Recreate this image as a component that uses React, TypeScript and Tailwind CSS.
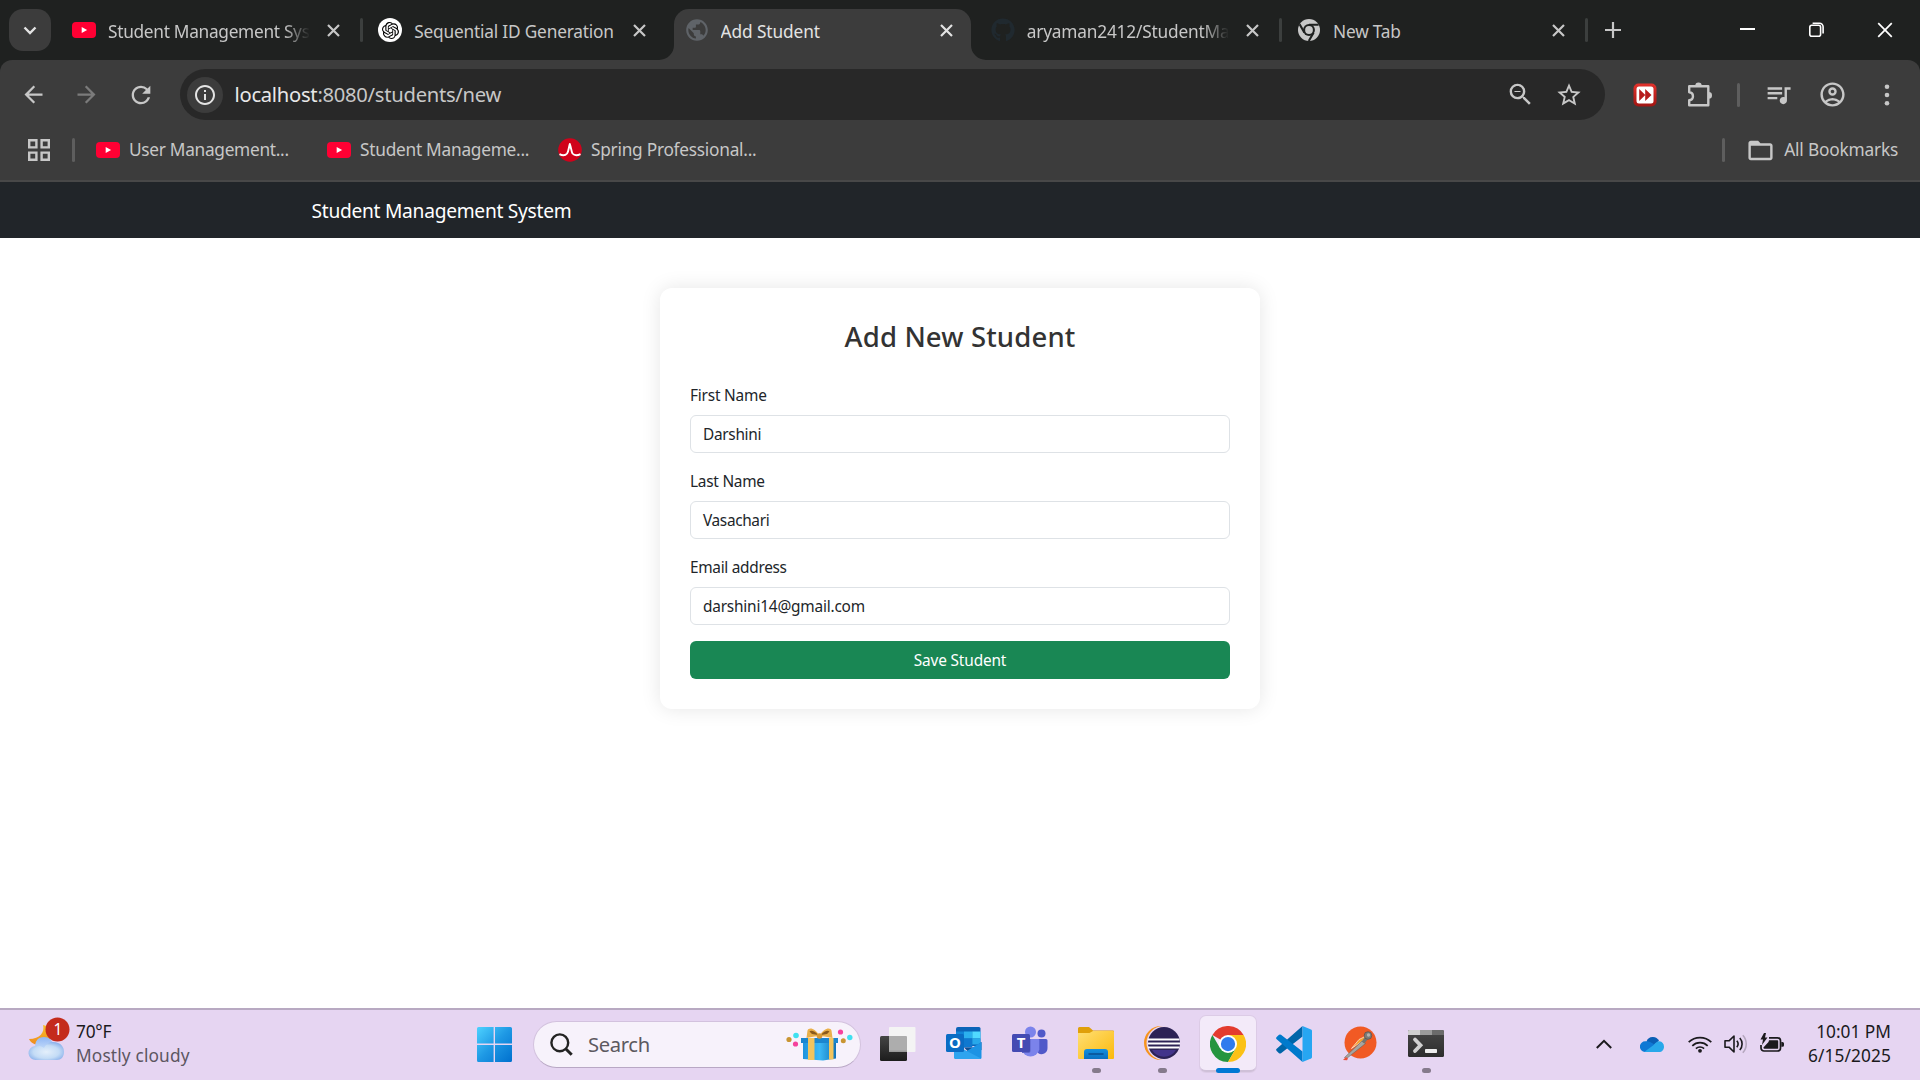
import React from "react";
import {
  MdArrowBack,
  MdArrowForward,
  MdRefresh,
  MdInfoOutline,
  MdZoomOut,
  MdStarBorder,
  MdQueueMusic,
  MdOutlineAccountCircle,
  MdFolderOpen,
  MdPublic,
} from "react-icons/md";
import { FaGithub } from "react-icons/fa";
import { SiOpenai } from "react-icons/si";

/* ---------- small browser icons ---------- */

const YouTube = () => (
  <svg width="24" height="24" viewBox="0 0 24 24" className="shrink-0">
    <rect x="0" y="4" width="24" height="16" rx="4" fill="#ff0033" />
    <path d="M9.7 8.9v6.2l5.4-3.1z" fill="#fff" />
  </svg>
);

const Pulse = () => (
  <svg width="24" height="24" viewBox="0 0 24 24" className="shrink-0">
    <circle cx="12" cy="12" r="11.8" fill="#d0021b" />
    <path d="M1.5 16.2c3 1.6 6 1.2 7.6-.7 1.5-2 1.7-6.2 2.7-9.5 1.3 3.3 1.5 7.5 2.7 9.5 1.7 2 5 2.1 8 .6" fill="none" stroke="#fff" strokeWidth="1.9" strokeLinejoin="round" />
  </svg>
);

const OpenAIBadge = () => (
  <span className="flex size-6 shrink-0 items-center justify-center rounded-full bg-white text-black">
    <SiOpenai size={17} />
  </span>
);

const GrayChrome = () => (
  <svg width="22" height="22" viewBox="0 0 48 48">
    <circle cx="24" cy="24" r="24" fill="#c7c7c7" />
    <path d="M24 12.500H45M14 29.700L3.500 11.600M34 29.700L23.500 47.900" stroke="#1f2120" strokeWidth="4.500" fill="none" />
    <circle cx="24" cy="24" r="13" fill="#1f2120" />
    <circle cx="24" cy="24" r="8.500" fill="#c7c7c7" />
  </svg>
);

const Cross = ({ color, size = 13, w = 2.2 }: { color: string; size?: number; w?: number }) => (
  <svg width={size} height={size} viewBox="0 0 13 13">
    <path d="M1 1l11 11M12 1L1 12" stroke={color} strokeWidth={w} fill="none" />
  </svg>
);

const Puzzle = () => (
  <svg width="27" height="27" viewBox="0 0 27 27">
    <path d="M3.2 5.2H22.3V24.2H3.2V19.3C8.2 19 8.2 11.6 3.2 11.2Z" fill="none" stroke="#c7c7c7" strokeWidth="2.4" strokeLinejoin="round" />
    <path d="M9.3 4.600a3.200 3.200 0 0 1 6.400 0zM22.700 11.100a3.300 3.300 0 0 1 0 6.600z" fill="#c7c7c7" />
  </svg>
);

const FastForward = () => (
  <svg width="24" height="24" viewBox="0 0 24 24">
    <defs>
      <linearGradient id="ff" x1="0" y1="0" x2="0" y2="1">
        <stop offset="0" stopColor="#e2322c" />
        <stop offset="1" stopColor="#a01512" />
      </linearGradient>
    </defs>
    <rect x=".5" y=".5" width="23" height="23" rx="5" fill="url(#ff)" />
    <rect x="3.500" y="3.500" width="17" height="17" rx="2.500" fill="#fff" />
    <path d="M6.200 6l6.100 6-6.100 6zM12.200 6l6.300 6-6.300 6z" fill="#b71c1c" />
  </svg>
);

/* ---------- tab strip ---------- */

type TabProps = {
  icon: React.ReactNode;
  title: string;
  spacing: string;
  active?: boolean;
  fade?: boolean;
  divider?: boolean;
};

function Tab({ icon, title, spacing, active, fade, divider }: TabProps) {
  return (
    <div className="relative flex h-full w-[306.25px] shrink-0 items-center pl-[12px]">
      {active && (
        <div className="absolute top-[9px] bottom-0 left-[1px] w-[297px] rounded-t-[15px] bg-[#3c3c3c]">
          <svg className="absolute bottom-0 -left-[15px]" width="15" height="15" viewBox="0 0 15 15">
            <path d="M15 0V15H0A15 15 0 0 0 15 0Z" fill="#3c3c3c" />
          </svg>
          <svg className="absolute -right-[15px] bottom-0" width="15" height="15" viewBox="0 0 15 15">
            <path d="M0 0V15H15A15 15 0 0 1 0 0Z" fill="#3c3c3c" />
          </svg>
        </div>
      )}
      <span className="relative flex w-6 justify-center">{icon}</span>
      <span
        className={`relative mt-[4px] ml-[12px] w-[202px] overflow-hidden text-[17.3px] whitespace-nowrap ${spacing} ${
          active ? "text-[#e3e3e3]" : "text-[#c7c7c7]"
        } ${fade ? "[mask-image:linear-gradient(to_right,black_87%,transparent_100%)]" : ""}`}
      >
        {title}
      </span>
      <span className="relative ml-[17px]">
        <Cross color={active ? "#e3e3e3" : "#c7c7c7"} />
      </span>
      {divider && <span className="ml-[20px] h-6 w-[3px] rounded-full bg-[#3c3f3e]" />}
    </div>
  );
}

function TabStrip() {
  return (
    <div className="flex h-[60px] items-center bg-[#1f2120]">
      <div className="ml-[9px] flex size-[42px] items-center justify-center rounded-[14px] bg-[#3c3c3c]">
        <svg width="14" height="9" viewBox="0 0 14 9">
          <path d="M1.500 1.500L7 7l5.500-5.500" fill="none" stroke="#e3e3e3" strokeWidth="2.400" />
        </svg>
      </div>
      <div className="ml-[9px] flex h-full">
        <Tab icon={<YouTube />} title="Student Management System" spacing="tracking-[-0.3px]" fade divider />
        <Tab icon={<OpenAIBadge />} title="Sequential ID Generation" spacing="tracking-[-0.2px]" />
        <Tab icon={<MdPublic size={26} color="#5f6368" className="-m-px shrink-0" />} title="Add Student" spacing="tracking-[-0.1px]" active />
        <Tab icon={<FaGithub size={24} color="#20292f" />} title="aryaman2412/StudentManagement" spacing="tracking-[-0.2px]" fade divider />
        <Tab icon={<GrayChrome />} title="New Tab" spacing="tracking-[-0.2px]" divider />
      </div>
      <svg className="ml-[14px]" width="16" height="16" viewBox="0 0 16 16">
        <path d="M8 0v16M0 8h16" stroke="#c7c7c7" strokeWidth="2.200" />
      </svg>
      <div className="flex flex-1 items-center justify-end pr-[27px]">
        <svg width="15" height="16" viewBox="0 0 15 16">
          <path d="M0 7h15" stroke="#fff" strokeWidth="2" />
        </svg>
        <svg className="ml-[54px]" width="15" height="16" viewBox="0 0 15 16" fill="none" stroke="#fff" strokeWidth="1.600">
          <rect x=".8" y="3.300" width="10.800" height="11" rx="2" />
          <path d="M3.600 1.200h6.900a3.600 3.600 0 0 1 3.600 3.600v6.600" />
        </svg>
        <span className="ml-[53px]">
          <Cross color="#fff" size={16} w={1.4} />
        </span>
      </div>
    </div>
  );
}

/* ---------- toolbar + bookmarks ---------- */

function Toolbar() {
  return (
    <div className="flex h-[51px] items-center text-[#c7c7c7]">
      <MdArrowBack size={27} className="ml-[19.500px]" />
      <MdArrowForward size={27} className="ml-[26.500px] text-[#7b7b7b]" />
      <MdRefresh size={28} className="ml-[26.500px]" />
      <div className="ml-[25px] flex h-[51px] w-[1425px] items-center rounded-full bg-[#282828] pl-[7px]">
        <span className="flex size-9 items-center justify-center rounded-full bg-[#3c3c3c] text-[#e3e3e3]">
          <MdInfoOutline size={24} />
        </span>
        <span className="ml-[12px] text-[20.200px] tracking-[-0.270px] text-[#c7c7c7]">
          <span className="text-[#e8e8e8]">localhost</span>:8080/students/new
        </span>
        <MdZoomOut size={29} className="mr-[20px] ml-auto" />
        <MdStarBorder size={28} className="mr-[22px]" />
      </div>
      <span className="ml-[28px]">
        <FastForward />
      </span>
      <span className="ml-[29px]">
        <Puzzle />
      </span>
      <span className="ml-[24px] h-6 w-[3px] rounded-full bg-[#5e5e5e]" />
      <MdQueueMusic size={29} className="ml-[24px]" />
      <MdOutlineAccountCircle size={29} className="ml-[25px]" />
      <svg className="ml-[37px]" width="6" height="24" viewBox="0 0 6 24" fill="#c7c7c7">
        <circle cx="3" cy="3.800" r="2.300" />
        <circle cx="3" cy="12" r="2.300" />
        <circle cx="3" cy="20.200" r="2.300" />
      </svg>
    </div>
  );
}

function Bookmarks() {
  return (
    <div className="flex h-[60px] items-center text-[17.300px] whitespace-nowrap text-[#c7c7c7]">
      <svg className="ml-[28px]" width="22" height="22" viewBox="0 0 22 22" fill="none" stroke="#c7c7c7" strokeWidth="2.400">
        <path d="M1.200 1.200h7.200v7.200H1.200zM13.600 1.200h7.200v7.200h-7.200zM1.200 13.600h7.200v7.200H1.200zM13.600 13.600h7.200v7.200h-7.200z" />
      </svg>
      <span className="ml-[22px] h-6 w-[3px] rounded-full bg-[#5e5e5e]" />
      <div className="ml-[21px] flex w-[231px] items-center gap-[9px] tracking-[-0.300px]">
        <YouTube />
        User Management...
      </div>
      <div className="flex w-[231px] items-center gap-[9px] tracking-[-0.260px]">
        <YouTube />
        Student Manageme...
      </div>
      <div className="flex items-center gap-[9px] tracking-[-0.260px]">
        <Pulse />
        Spring Professional...
      </div>
      <span className="ml-auto h-6 w-[3px] rounded-full bg-[#5e5e5e]" />
      <MdFolderOpen size={29} className="ml-[21px]" />
      <span className="mr-[22px] ml-[9.500px] tracking-[-0.200px]">All Bookmarks</span>
    </div>
  );
}

/* ---------- page ---------- */

function Field({ label, value, labelSpacing, valueSpacing }: Record<"label" | "value" | "labelSpacing" | "valueSpacing", string>) {
  return (
    <div className="mb-4">
      <div className={`mb-2 h-6 pt-px leading-6 ${labelSpacing}`}>{label}</div>
      <div className={`flex h-[38px] items-center rounded-[6px] border border-[#dee2e6] px-3 pt-[2px] ${valueSpacing}`}>{value}</div>
    </div>
  );
}

function Page() {
  return (
    <div className="flex flex-1 flex-col bg-white">
      <div className="flex h-14 items-center bg-[#212529] pl-[311.500px] text-[19.200px] tracking-[-0.280px] text-white">
        <span className="mt-[2px]">Student Management System</span>
      </div>
      <div className="mx-auto mt-[50px] h-[421px] w-[600px] rounded-[12px] bg-white p-[30px] text-[15.400px] text-[#212529] shadow-[0_0_20px_rgba(0,0,0,0.1)]">
        <h2 className="h-[65px] pt-px text-center text-[27.500px] leading-[36px] font-medium tracking-[0.150px] text-[#333]">Add New Student</h2>
        <Field label="First Name" value="Darshini" labelSpacing="tracking-[-0.200px]" valueSpacing="tracking-[-0.300px]" />
        <Field label="Last Name" value="Vasachari" labelSpacing="tracking-[-0.250px]" valueSpacing="tracking-[-0.350px]" />
        <Field label="Email address" value="darshini14@gmail.com" labelSpacing="tracking-[-0.300px]" valueSpacing="tracking-[-0.200px]" />
        <div className="flex h-[38px] items-center justify-center rounded-[6px] bg-[#198754] pt-[2px] tracking-[-0.150px] text-white">Save Student</div>
      </div>
    </div>
  );
}

/* ---------- taskbar ---------- */

const Weather = () => (
  <svg width="42" height="46" viewBox="0 0 42 46">
    <defs>
      <linearGradient id="moon" x1="0" y1="0" x2="0" y2="1">
        <stop offset="0" stopColor="#f8c22c" />
        <stop offset="1" stopColor="#ee8a1d" />
      </linearGradient>
      <linearGradient id="cloudBack" x1="0" y1="0" x2="0" y2="1">
        <stop offset="0" stopColor="#8fb6f4" />
        <stop offset="1" stopColor="#cfe3fb" />
      </linearGradient>
      <radialGradient id="cloudFront" cx=".5" cy=".55" r=".6">
        <stop offset="0" stopColor="#e4effb" />
        <stop offset=".6" stopColor="#c4dcf6" />
        <stop offset="1" stopColor="#86aeea" />
      </radialGradient>
    </defs>
    <path d="M15 8c2 7-3 14-14 14 2 4 6 6 11 6l10-6V10z" fill="url(#moon)" />
    <path d="M7 30c0-6 3-10 9-10 5 0 8 3 9 7v8H7z" fill="url(#cloudBack)" />
    <path d="M8 43a7 7 0 0 1-1-14c3-1 6 0 9 2 3-6 9-7 14-5 5 2 6 6 6 9 0 5-3 8-7 8z" fill="url(#cloudFront)" />
    <circle cx="29.500" cy="12.500" r="12" fill="#c42b1c" />
    <text x="30" y="18" textAnchor="middle" fontSize="15.500" fill="#fff" fontFamily="Noto Sans, sans-serif">1</text>
  </svg>
);

const Windows = () => (
  <svg width="35" height="35" viewBox="0 0 35 35">
    <defs>
      <linearGradient id="win" x1="0" y1="0" x2="35" y2="35" gradientUnits="userSpaceOnUse">
        <stop offset="0" stopColor="#4ed2ff" />
        <stop offset=".5" stopColor="#1e98e4" />
        <stop offset="1" stopColor="#0070ce" />
      </linearGradient>
    </defs>
    <path d="M1.500 0H16.600V16.600H0V1.500A1.500 1.500 0 0 1 1.500 0zM18 0H33.500A1.500 1.500 0 0 1 35 1.500V16.600H18zM0 18H16.600V35H1.500A1.500 1.500 0 0 1 0 33.500zM18 18H35V33.500A1.500 1.500 0 0 1 33.500 35H18z" fill="url(#win)" />
  </svg>
);

const Gift = () => (
  <svg width="68" height="36" viewBox="0 0 68 36">
    <defs>
      <linearGradient id="giftBox" x1="0" x2="1" y1="0" y2="0">
        <stop offset="0" stopColor="#1e93dc" />
        <stop offset=".5" stopColor="#3bb8f6" />
        <stop offset="1" stopColor="#1273b8" />
      </linearGradient>
    </defs>
    <path d="M17 12h33v19.500l-13 2L17 32z" fill="url(#giftBox)" />
    <path d="M15 11h37v5H15z" fill="#1b86cf" />
    <path d="M22 11h6.500v22H22zM43 11h4.500v21.500H43z" fill="#f3c45c" />
    <path d="M33.500 9C29 1 23 0 21.500 3.500L20.500 11l8-1.500zM33.500 9C38 1 44 0 45.500 3.500L46.500 11l-8-1.500z" fill="#eab04a" />
    <path d="M32 8c-3-4-7-5-8.500-3.500L26 7zM35 8c3-4 7-5 8.500-3.500L41 7z" fill="#8b5a1c" />
    <circle cx="33.500" cy="9" r="2.800" fill="#d99a35" />
    <circle cx="3" cy="12.500" r="2.600" fill="#c99532" />
    <circle cx="10" cy="8.500" r="2.800" fill="#3fe0ef" />
    <circle cx="9.500" cy="17" r="2.600" fill="#f5419c" />
    <circle cx="54.500" cy="5" r="2.600" fill="#f5419c" />
    <circle cx="63.800" cy="10.500" r="2.700" fill="#3fe0ef" />
    <circle cx="57.300" cy="13.800" r="2.500" fill="#c99532" />
  </svg>
);

const TaskView = () => (
  <svg width="36" height="36" viewBox="0 0 36 36">
    <defs>
      <linearGradient id="tvDark" x1="0" y1="0" x2="0" y2="1">
        <stop offset="0" stopColor="#454545" />
        <stop offset="1" stopColor="#1c1c1c" />
      </linearGradient>
    </defs>
    <rect x="0" y="10" width="27" height="25" rx="1.500" fill="url(#tvDark)" />
    <rect x="9" y="1" width="26.500" height="25" rx="1" fill="#f4f4f4" />
    <path d="M9 10h17a1 1 0 0 1 1 1v15H9z" fill="#adadad" />
    <path d="M9 24.500h18V26H9z" fill="#9a9a9a" />
  </svg>
);

const Outlook = () => (
  <svg width="36" height="36" viewBox="0 0 36 36">
    <path d="M10 3a2 2 0 0 1 2-2h21a1.500 1.500 0 0 1 1.500 1.500V20H10z" fill="#0b64b8" />
    <path d="M10 5.500h8v7h-8z" fill="#1184d8" />
    <path d="M18 5.500h8.300v7H18z" fill="#2bb0ee" />
    <path d="M26.300 5.500h8.200v7h-8.200z" fill="#50d9ff" />
    <path d="M10 12.500h16.300v9H10z" fill="#0f78d0" />
    <path d="M26.300 12.500h8.200v6h-8.200z" fill="#28a8ea" />
    <path d="M18 21.500h10l7.500-5.500v8l-12 3z" fill="#0f4f93" />
    <path d="M35.500 16v15.500A1.500 1.500 0 0 1 34 33H10a2 2 0 0 1-2-2V22l12 3.500z" fill="#1c93e4" />
    <path d="M18 23.500l17 9a2 2 0 0 1-1.200.5H10a2 2 0 0 1-2-2V26z" fill="#2ea4ef" />
    <rect x="0" y="8" width="18" height="18" rx="1.500" fill="#0a6cc4" />
    <text x="9" y="22.300" textAnchor="middle" fontSize="15" fontWeight="700" fill="#fff" fontFamily="Noto Sans, sans-serif">O</text>
  </svg>
);

const Teams = () => (
  <svg width="36" height="36" viewBox="0 0 36 36">
    <circle cx="18.500" cy="6" r="5.500" fill="#7b83eb" />
    <circle cx="29.500" cy="7.500" r="4" fill="#5059c9" />
    <path d="M26 13h8a1.500 1.500 0 0 1 1.500 1.500V22a6 6 0 0 1-9.500 5z" fill="#5059c9" />
    <path d="M10 13h16.300a1 1 0 0 1 1 1v9.500a9 9 0 0 1-17.600 0z" fill="#7b83eb" />
    <path d="M10 13h8.500v12a2 2 0 0 1-2 2H10z" fill="#5b63c8" />
    <rect x="0" y="8" width="18" height="18" rx="1.500" fill="#444bb3" />
    <text x="9" y="22.300" textAnchor="middle" fontSize="15" fontWeight="700" fill="#fff" fontFamily="Noto Sans, sans-serif">T</text>
  </svg>
);

const Folder = () => (
  <svg width="36" height="36" viewBox="0 0 36 36">
    <defs>
      <linearGradient id="fold" x1="0" y1="0" x2="1" y2="1">
        <stop offset="0" stopColor="#ffdf74" />
        <stop offset="1" stopColor="#fbb90c" />
      </linearGradient>
      <linearGradient id="foldTray" x1="0" y1="0" x2="0" y2="1">
        <stop offset="0" stopColor="#1490df" />
        <stop offset="1" stopColor="#0a6fc0" />
      </linearGradient>
    </defs>
    <path d="M0 2.500A1.500 1.500 0 0 1 1.500 1H10c1 0 1.500.3 2.200 1L15 4.500h20a1 1 0 0 1 1 1V12H0z" fill="#e0a00a" />
    <path d="M0 7h11.500l3.500-2h20a1 1 0 0 1 1 1v26a1 1 0 0 1-1 1H1a1 1 0 0 1-1-1z" fill="url(#fold)" />
    <path d="M6 33v-7a3 3 0 0 1 3-3h18a3 3 0 0 1 3 3v7z" fill="url(#foldTray)" />
    <path d="M11 28h14" stroke="#0a4f91" strokeWidth="1.500" strokeLinecap="round" />
  </svg>
);

const Eclipse = () => (
  <svg width="36" height="36" viewBox="0 0 36 36">
    <circle cx="17" cy="17" r="17" fill="#f7941e" />
    <circle cx="19.500" cy="17" r="17" fill="#e6d5f2" />
    <circle cx="20" cy="17" r="16" fill="#2c2255" />
    <path d="M8 24a14 14 0 0 0 24 0z" fill="#43348a" />
    <path d="M4 13.500h31.500M4 17.500h32M4 21.500h31.500" stroke="#fff" strokeWidth="1.900" />
  </svg>
);

const Chrome = () => (
  <svg width="36" height="36" viewBox="0 0 48 48">
    <path d="M24 24L3.200 12A24 24 0 0 1 44.800 12z" fill="#e33b2e" />
    <path d="M24 48L34.400 30 24 24 13.600 30 3.200 12A24 24 0 0 0 24 48z" fill="#25953f" />
    <path d="M24 12h20.800A24 24 0 0 1 24 48l10.400-18z" fill="#fbc116" />
    <circle cx="24" cy="24" r="12" fill="#fff" />
    <circle cx="24" cy="24" r="9.500" fill="#2f7bee" />
  </svg>
);

const VSCode = () => (
  <svg width="36" height="36" viewBox="0 0 36 36">
    <path d="M26.500 0v10.500L5 27.200a1.600 1.600 0 0 1-2 0L.7 25a1.600 1.600 0 0 1 0-2.300z" fill="#0065a9" />
    <path d="M26.500 36V25.500L5 8.800a1.600 1.600 0 0 0-2 0L.7 11a1.600 1.600 0 0 0 0 2.300z" fill="#007acc" />
    <path d="M26.500 36V0L35 3.500a1.700 1.700 0 0 1 1 1.500v26a1.700 1.700 0 0 1-1 1.500z" fill="#27a6f2" />
  </svg>
);

const Postman = () => (
  <svg width="36" height="36" viewBox="0 0 36 36">
    <circle cx="18.500" cy="16.500" r="16" fill="#f15a24" />
    <path d="M17 13.500l6-3 1 2-14.500 10z" fill="#f7a02b" stroke="#fff" strokeWidth=".6" />
    <path d="M20 15l3.500 2.500L4 33l-1.500-1.500z" fill="#a7a5a0" stroke="#5e5a55" strokeWidth=".5" />
    <path d="M24.500 12l-3.500 4.500" stroke="#77736e" strokeWidth="3.600" />
    <circle cx="26" cy="9.500" r="3.800" fill="#7d7b77" stroke="#4d4a46" strokeWidth=".6" />
    <circle cx="26.500" cy="9" r="1.700" fill="#b5b3af" />
    <path d="M1 34l3-3 2 1.500-1 1.700z" fill="#e9503a" />
  </svg>
);

const Terminal = () => (
  <svg width="36" height="36" viewBox="0 0 36 36">
    <defs>
      <linearGradient id="term" x1="0" y1="0" x2="0" y2="1">
        <stop offset="0" stopColor="#474747" />
        <stop offset="1" stopColor="#2d2d2d" />
      </linearGradient>
    </defs>
    <rect x="0" y="4" width="36" height="27" rx="1.500" fill="url(#term)" />
    <path d="M0 9V5.500A1.500 1.500 0 0 1 1.500 4H12v5z" fill="#cfcfcf" />
    <path d="M12 4h12v5H12z" fill="#9b9b9b" />
    <path d="M24 4h10.500A1.500 1.500 0 0 1 36 5.500V9H24z" fill="#6b6b6b" />
    <path d="M7 13.500l5.500 5.700L7 25" fill="none" stroke="#d0d0d0" strokeWidth="3.800" strokeLinecap="round" />
    <rect x="17" y="23" width="12" height="4" rx=".8" fill="#ededed" />
  </svg>
);

function TaskItem({ children, dot, active }: { children: React.ReactNode; dot?: boolean; active?: boolean }) {
  return (
    <div className="relative flex h-[56px] w-[66px] items-center justify-center">
      {active && (
        <div className="absolute inset-y-0 left-[5px] w-[56px] rounded-[6px] border-b-2 border-[#cfc0d8] bg-[#f3eaf9] shadow-[0_0_0_1px_#dccbe6]" />
      )}
      <span className="relative">{children}</span>
      {dot && <span className="absolute bottom-[-1px] left-[28.500px] h-[5px] w-[9px] rounded-full bg-[#857a8c]" />}
      {active && <span className="absolute bottom-[-1px] left-[21px] h-[5px] w-[24px] rounded-full bg-[#0078d4]" />}
    </div>
  );
}

function Taskbar() {
  return (
    <div className="flex h-[72px] items-center border-t-2 border-[#b8a9c2] bg-[#e6d5f2] pb-[2px] text-[17.300px] text-[#1b1a1d]">
      <div className="flex w-[477px] items-center pl-[28px]">
        <span className="-mt-[8px]">
          <Weather />
        </span>
        <div className="ml-[6px] leading-6">
          <div className="tracking-[-0.200px]">70°F</div>
          <div className="tracking-[0.150px] text-[#5c5661]">Mostly cloudy</div>
        </div>
      </div>
      <Windows />
      <div className="ml-[21px] flex h-[47px] w-[328px] items-center rounded-full border-[1.500px] border-[#d3c2de] border-b-[#b9a8c5] bg-[#f7f2fb] pl-[16px]">
        <svg width="23" height="23" viewBox="0 0 23 23" fill="none" stroke="#232323" strokeWidth="2.400">
          <circle cx="9.800" cy="9.800" r="8.400" />
          <path d="M15.700 15.700l6 6" strokeWidth="3" />
        </svg>
        <span className="mt-px ml-[15px] text-[20.200px] tracking-[-0.350px] text-[#5c5960]">Search</span>
        <span className="mt-px mr-[6px] ml-auto">
          <Gift />
        </span>
      </div>
      <div className="ml-[4px] flex">
        <TaskItem><TaskView /></TaskItem>
        <TaskItem><Outlook /></TaskItem>
        <TaskItem><Teams /></TaskItem>
        <TaskItem dot><Folder /></TaskItem>
        <TaskItem dot><Eclipse /></TaskItem>
        <TaskItem active><Chrome /></TaskItem>
        <TaskItem><VSCode /></TaskItem>
        <TaskItem><Postman /></TaskItem>
        <TaskItem dot><Terminal /></TaskItem>
      </div>
      <div className="flex flex-1 items-center justify-end pr-[29px]">
        <svg width="16" height="10" viewBox="0 0 16 10" fill="none" stroke="#1b1a1d" strokeWidth="2">
          <path d="M.8 9L8 1.800 15.200 9" />
        </svg>
        <svg className="ml-[28px]" width="24" height="16" viewBox="0 0 24 16">
          <path d="M6.500 5.500A6.800 6.800 0 0 1 19 4.800L12 11z" fill="#0a5fb5" />
          <path d="M5 16A5.200 5.200 0 0 1 5.500 5.300c3-.6 5.500.7 9 3.200L9 16z" fill="#0f78d4" />
          <path d="M4.500 15.700L14 8.800c1-1.800 3-3.600 5.500-3.600 2.500.3 4.500 2.300 4.500 5.500 0 3-2 5.300-5 5.300H5.500z" fill="#28a8ea" />
        </svg>
        <svg className="-mt-[1px] ml-[24px]" width="24" height="18" viewBox="0 0 24 18" fill="none" stroke="#1b1a1d" strokeWidth="1.700">
          <path d="M.7 7.200a16 16 0 0 1 22.600 0M4.300 10.800a11 11 0 0 1 15.400 0M7.900 13.600a6 6 0 0 1 8.200 0" />
          <circle cx="12" cy="15.800" r="1.900" fill="#1b1a1d" stroke="none" />
        </svg>
        <svg className="ml-[12px]" width="24" height="20" viewBox="0 0 24 20" fill="none" stroke="#1b1a1d" strokeWidth="1.600">
          <path d="M1 6.800h4L10 2v16l-5-4.800H1z" strokeLinejoin="round" />
          <path d="M12.800 6.800a5 5 0 0 1 0 6.400M15.800 4a9 9 0 0 1 0 12" />
          <path d="M18.800 1.200a13 13 0 0 1 0 17.600" stroke="#b5a7be" />
        </svg>
        <svg className="-mt-[3px] ml-[12px]" width="24" height="20" viewBox="0 0 24 20">
          <path d="M9 4.800h8.500a3 3 0 0 1 3 3V15a3 3 0 0 1-3 3H4a3 3 0 0 1-3-3v-3" fill="none" stroke="#1b1a1d" strokeWidth="1.700" />
          <path d="M9 7.200h8a1 1 0 0 1 1.200 1V14.500a1 1 0 0 1-1.200 1.200H4.500A1 1 0 0 1 3.400 14.600L8.500 9z" fill="#1b1a1d" />
          <path d="M21.300 9h1.200a1.500 1.500 0 0 1 1.500 1.500v1.800a1.500 1.500 0 0 1-1.500 1.500h-1.200z" fill="#1b1a1d" />
          <path d="M4 0L.5 6.500H3L2 12l5.500-7.500H5L6 0z" fill="#1b1a1d" />
        </svg>
        <div className="ml-[24px] w-[83px] text-right leading-6 whitespace-nowrap">
          <div className="tracking-[0px]">10:01 PM</div>
          <div className="tracking-[0.100px]">6/15/2025</div>
        </div>
      </div>
    </div>
  );
}

export default function App() {
  return (
    <div className="flex h-[1080px] w-[1920px] flex-col overflow-hidden bg-white font-['Noto_Sans',sans-serif]">
      <TabStrip />
      <div className="bg-[#1f2120]">
        <div className="h-[122px] rounded-t-[12px] border-b-2 border-[#484848] bg-[#3c3c3c] pt-[9px]">
          <Toolbar />
          <Bookmarks />
        </div>
      </div>
      <Page />
      <Taskbar />
    </div>
  );
}
